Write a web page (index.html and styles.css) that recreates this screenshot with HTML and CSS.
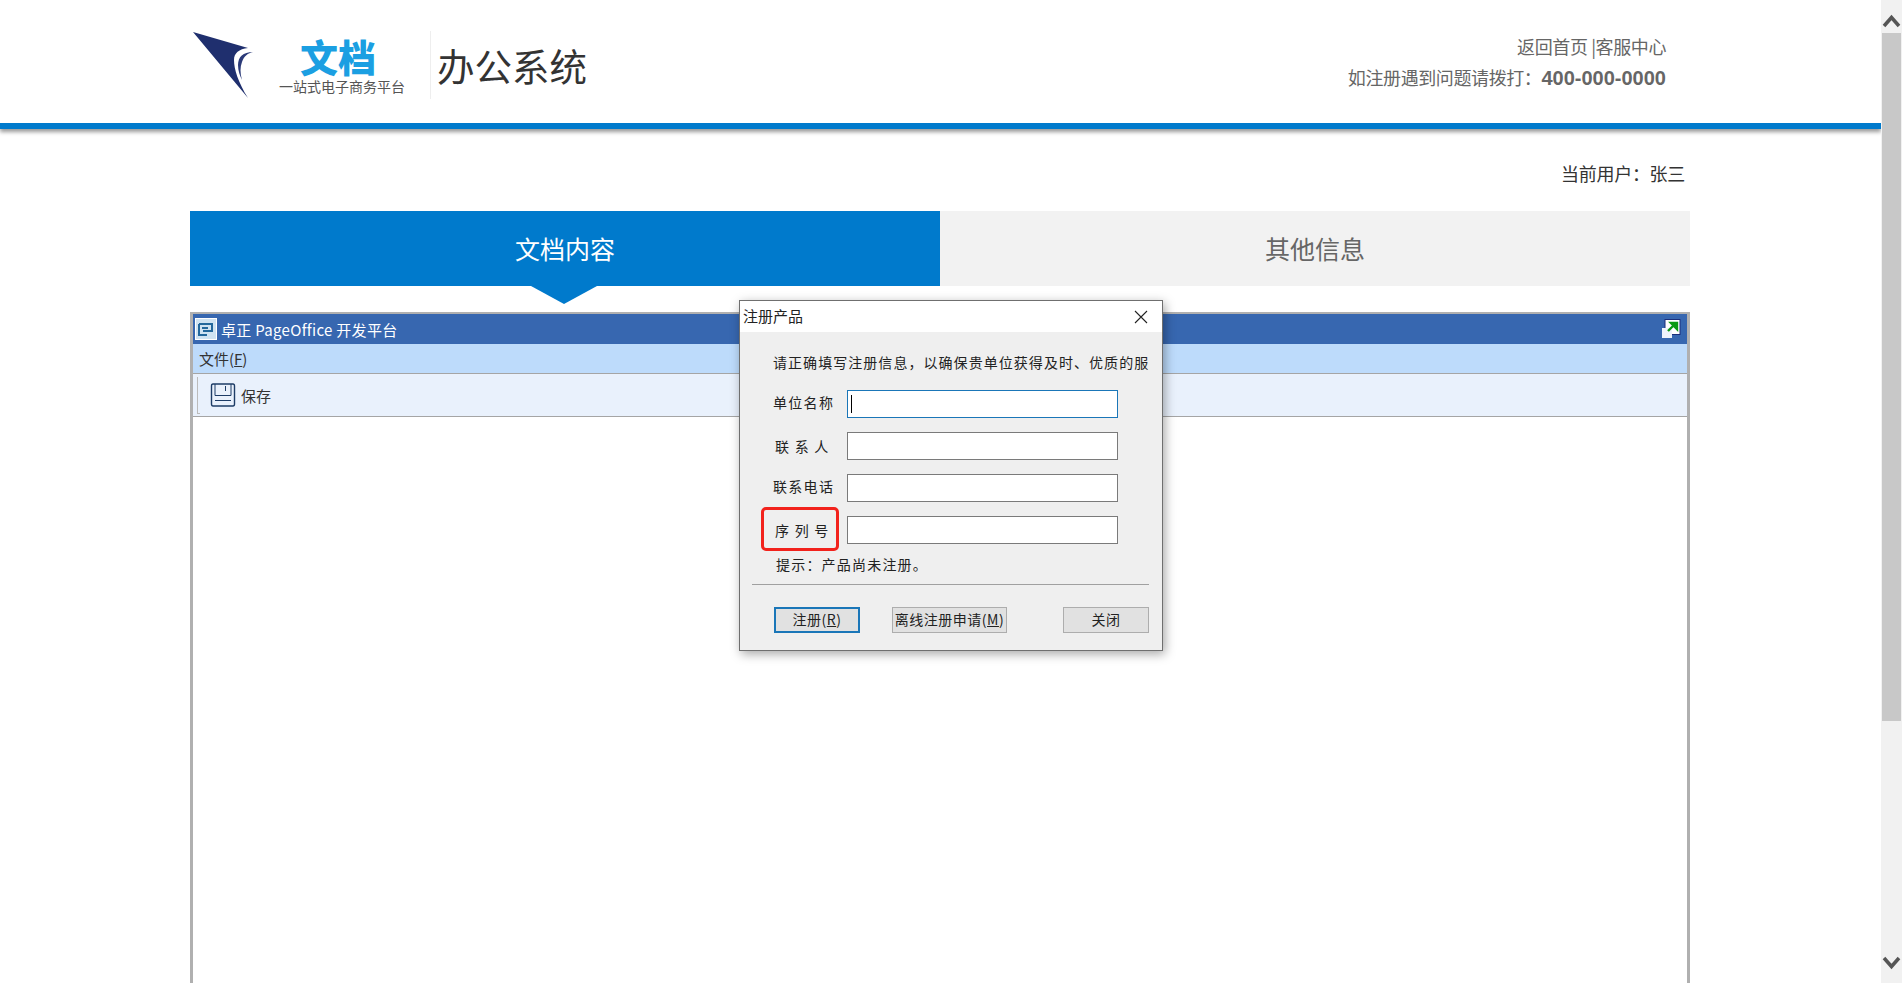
FILE: index.html
```html
<!DOCTYPE html>
<html lang="zh-CN">
  <head>
    <meta charset="UTF-8" />
    <title>办公系统</title>
    <link rel="stylesheet" href="styles.css">
  </head>
  <body>
    <div class="viewport">
      <div class="page">
        <div class="site-header">
          <div class="header-inner">
            <div class="logo">
              <svg class="logo-mark" width="66" height="72" viewBox="0 0 66 72">
                <path d="M2 3 L57 19 C48 20 43 24 43 31 C43 40 47 53 57 69 Z" fill="#1f2f6e" />
                <path d="M62 23 C52 23 47 28 47 36 C47 42 49 47 51 51 C49 44 49 38 51 33 C53 27 57 24 62 23 Z" fill="#2b3a78" />
              </svg>
              <div class="logo-brand">
                <div class="logo-name">文档</div>
                <div class="logo-tag">一站式电子商务平台</div>
              </div>
              <div class="logo-title">办公系统</div>
            </div>
            <div class="header-links">
              <div>返回首页 |客服中心</div>
              <div class="hotline">如注册遇到问题请拨打：<b>400-000-0000</b></div>
            </div>
          </div>
        </div>

        <div class="content">
          <div class="user-line">当前用户：张三</div>
          <div class="tabs">
            <div class="tab tab-active">文档内容</div>
            <div class="tab">其他信息</div>
          </div>

          <div class="po-frame">
            <div class="po-title">
              <svg class="po-logo" width="22" height="22" viewBox="0 0 22 22">
                <rect x="0.5" y="0.5" width="21" height="21" fill="#cfe3f2" stroke="#fff" />
                <path d="M4 6 H17 V13 H8 M7 10 H13 M4 6 V17 H12" fill="none" stroke="#23689c" stroke-width="2" />
              </svg>
              <span class="po-title-text">卓正 PageOffice 开发平台</span>
              <svg class="po-expand" width="20" height="20" viewBox="0 0 20 20">
                <rect x="4" y="0.500" width="15" height="15" fill="#fff" stroke="#1c2f7a" />
                <rect x="1" y="9" width="10" height="10" fill="#eef3fb" />
                <path d="M7 12 L13 6 M10 4 H16 V10 Z" stroke="#0a9a12" stroke-width="2.400" fill="#0a9a12" />
              </svg>
            </div>
            <div class="po-menu">文件(<u>F</u>)</div>
            <div class="po-toolbar">
              <span class="grip"></span>
              <svg class="save-icon" width="26" height="24" viewBox="0 0 26 24">
                <path d="M1.500 3 Q1.500 1 3 1 H23 Q24.500 1 24.500 3 V21 Q24.500 23 23 23 H3 Q1.500 23 1.500 21 Z" fill="none" stroke="#1d3c66" stroke-width="1.400" />
                <path d="M5 1 V12.500 H21 V1 M5 17.500 H21 M15.500 3 V8" fill="none" stroke="#1d3c66" />
              </svg>
              <span>保存</span>
            </div>
            <div class="po-body"></div>

            <div class="dialog">
              <div class="dialog-title">
                <span class="dialog-caption">注册产品</span>
                <svg width="14" height="14" viewBox="0 0 14 14">
                  <path d="M1 1 L13 13 M13 1 L1 13" stroke="#222" stroke-width="1.100" />
                </svg>
              </div>
              <div class="dialog-body">
                <p class="dialog-intro">请正确填写注册信息，以确保贵单位获得及时、优质的服</p>
                <div class="form-row">
                  <label class="field-label">单位名称</label>
                  <div class="field field-focus"><span class="caret"></span></div>
                </div>
                <div class="form-row">
                  <label class="field-label field-label-wide">联 系 人</label>
                  <div class="field"></div>
                </div>
                <div class="form-row">
                  <label class="field-label">联系电话</label>
                  <div class="field"></div>
                </div>
                <div class="form-row">
                  <label class="field-label field-label-wide field-marked">序 列 号</label>
                  <div class="field"></div>
                </div>
                <p class="dialog-hint">提示：产品尚未注册。</p>
                <div class="dialog-rule"></div>
                <div class="dialog-actions">
                  <button class="btn btn-default">注册(<u>R</u>)</button>
                  <button class="btn btn-wide">离线注册申请(<u>M</u>)</button>
                  <button class="btn btn-close">关闭</button>
                </div>
              </div>
            </div>
          </div>
        </div>
      </div>

      <div class="scrollbar">
        <svg width="21" height="33" viewBox="0 0 21 33">
          <path d="M3 26 L10.500 17.500 L18 26" fill="none" stroke="#555" stroke-width="3.500" />
        </svg>
        <div class="scroll-track"><div class="scroll-thumb"></div></div>
        <svg width="21" height="35" viewBox="0 0 21 35">
          <path d="M3 10 L10.500 18.500 L18 10" fill="none" stroke="#555" stroke-width="3.500" />
        </svg>
      </div>
    </div>
  </body>
</html>
```

FILE: styles.css
```css
* {
  box-sizing: border-box;
}
body {
  margin: 0;
  font-family: "Noto Sans CJK SC", "Liberation Sans", sans-serif;
  background-color: #fff;
  color: #333;
}
.viewport {
  display: flex;
  height: 100vh;
  overflow: hidden;
}
.page {
  flex: 1;
  min-width: 0;
}
.site-header {
  height: 129px;
  border-bottom: 6px solid #007acc;
  box-shadow: 0 3px 4px rgba(0, 0, 0, 0.4);
}
.header-inner {
  display: flex;
  justify-content: space-between;
  margin-left: 190px;
  width: 1476px;
}
.logo {
  display: flex;
  padding-top: 28px;
}
.logo-mark {
  margin-left: 1px;
  margin-top: 1px;
}
.logo-brand {
  width: 164px;
  margin-left: 3px;
  padding-top: 7px;
  text-align: center;
}
.logo-name {
  padding-right: 8px;
  font-size: 38px;
  font-weight: 900;
  line-height: 42px;
  color: #1b9fe2;
}
.logo-tag {
  margin-top: 1px;
  font-size: 14px;
  line-height: 16px;
  color: #555;
}
.logo-title {
  height: 68px;
  margin: 3px 0 0 6px;
  padding: 10px 0 0 6px;
  border-left: 1px solid #eee;
  font-size: 37.500px;
  line-height: 48px;
}
.header-links {
  padding-top: 31px;
  text-align: right;
  font-size: 18px;
  line-height: 31px;
  letter-spacing: -0.400px;
  color: #666;
}
.hotline b {
  font-family: "Liberation Sans", sans-serif;
  font-size: 20px;
  letter-spacing: 0;
}
.content {
  width: 1500px;
  margin-left: 190px;
}
.user-line {
  padding: 29px 5px 0 0;
  height: 82px;
  text-align: right;
  font-size: 18px;
  line-height: 30px;
  letter-spacing: -0.300px;
}
.tabs {
  display: flex;
  height: 75px;
}
.tab {
  flex: 1;
  font-size: 25px;
  line-height: 75px;
  text-align: center;
  color: #666;
  background-color: #f2f2f2;
}
.tab-active {
  position: relative;
  color: #fff;
  background-color: #007acc;
}
.tab-active::after {
  content: "";
  position: absolute;
  left: 341px;
  top: 75px;
  border-left: 33px solid transparent;
  border-right: 33px solid transparent;
  border-top: 18px solid #007acc;
}
.po-frame {
  position: relative;
  height: 800px;
  margin-top: 26px;
  border: 3px solid #b0b0b0;
  border-top-width: 2px;
}
.po-title {
  display: flex;
  align-items: center;
  height: 30px;
  padding: 0 6px 0 2px;
  background-color: #3767b0;
  color: #fff;
  font-size: 15px;
  letter-spacing: 0.300px;
}
.po-logo {
  margin-right: 4px;
}
.po-title-text {
  flex: 1;
}
.po-menu {
  height: 30px;
  padding-left: 6px;
  border-bottom: 1px solid #a5a5a5;
  background-color: #bddbfb;
  font-size: 15px;
  line-height: 29px;
}
.po-toolbar {
  display: flex;
  align-items: center;
  height: 43px;
  border-bottom: 1px solid #a5a5a5;
  background-color: #e9f1fc;
  font-size: 15px;
}
.grip {
  width: 3px;
  height: 37px;
  margin: 0 10px 0 4px;
  border-left: 1px solid #bbb;
  border-bottom: 1px solid #bbb;
}
.save-icon {
  margin-right: 5px;
}
.dialog {
  position: absolute;
  left: 546px;
  top: -14px;
  width: 424px;
  height: 351px;
  border: 1px solid #6f6f6f;
  background-color: #efefef;
  box-shadow: 2px 3px 10px rgba(0, 0, 0, 0.35);
  color: #222;
  font-size: 14px;
}
.dialog-title {
  display: flex;
  justify-content: space-between;
  align-items: center;
  height: 31px;
  padding: 0 14px 0 3px;
  background-color: #fff;
  font-size: 15px;
}
.dialog-caption {
  margin-bottom: 2px;
}
.dialog-body {
  padding: 16px 13px 0 12px;
}
.dialog-intro {
  margin: 0 0 13px 21px;
  line-height: 29px;
  letter-spacing: 1.050px;
  white-space: nowrap;
}
.form-row {
  display: flex;
  align-items: center;
  height: 28px;
  margin-bottom: 14px;
}
.field-label {
  position: relative;
  width: 95px;
  padding-left: 21px;
  padding-bottom: 4px;
  letter-spacing: 1.300px;
}
.field-label-wide {
  padding-left: 23px;
  padding-bottom: 0;
  letter-spacing: 1.250px;
}
.field-marked::before {
  content: "";
  box-sizing: border-box;
  position: absolute;
  left: 9px;
  top: -13px;
  width: 78px;
  height: 44px;
  border: 3px solid #f2221c;
  border-radius: 5px;
}
.field {
  width: 271px;
  height: 28px;
  border: 1px solid #7a7a7a;
  background-color: #fff;
}
.field-focus {
  padding: 4px 3px;
  border-color: #1a76b8;
}
.caret {
  display: block;
  width: 1px;
  height: 18px;
  background-color: #000;
}
.dialog-hint {
  margin: -8px 0 0 24px;
  line-height: 28px;
  letter-spacing: 1.200px;
}
.dialog-rule {
  height: 1px;
  margin-top: 6px;
  background-color: #a0a0a0;
}
.dialog-actions {
  display: flex;
  margin: 22px 0 0 22px;
}
.btn {
  height: 26px;
  padding: 0 0 2px;
  border: 1px solid #adadad;
  background-color: #e1e1e1;
  color: #222;
  font-family: inherit;
  font-size: 14px;
  letter-spacing: 0.500px;
}
.btn-default {
  width: 86px;
  border: 2px solid #1a76b8;
}
.btn-wide {
  width: 115px;
  margin-left: 32px;
}
.btn-close {
  width: 86px;
  margin-left: 56px;
}
.scrollbar {
  display: flex;
  flex-direction: column;
  width: 21px;
  flex-shrink: 0;
  background-color: #f1f1f1;
}
.scroll-track {
  flex: 1;
}
.scroll-thumb {
  height: 688px;
  margin: 0 1px;
  background-color: #c8c8c8;
}
```
